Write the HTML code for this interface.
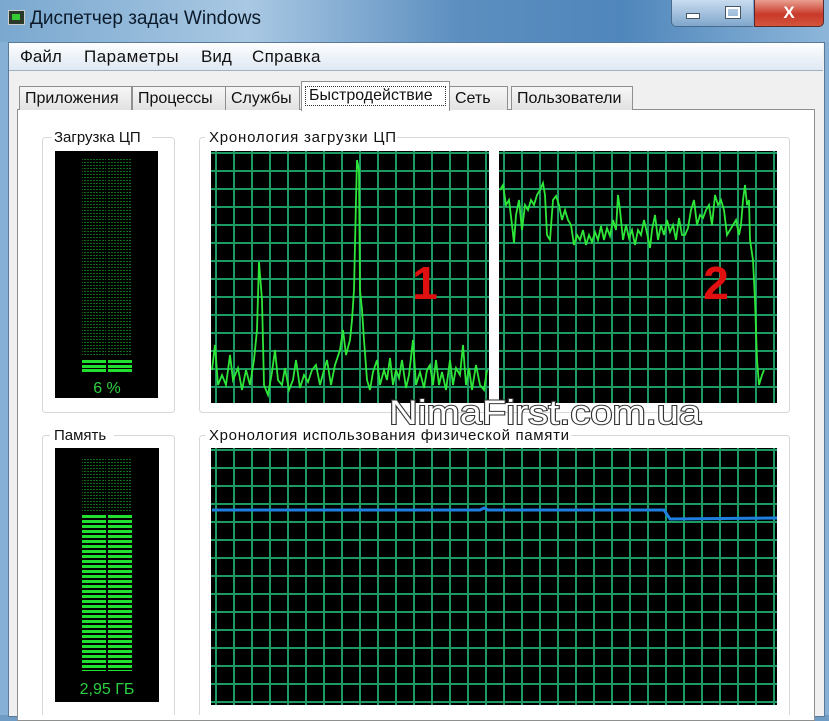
<!DOCTYPE html>
<html><head><meta charset="utf-8"><style>
body{margin:0;width:829px;height:715px;overflow:hidden;font-family:"Liberation Sans","DejaVu Sans",sans-serif;background:#6f9cc4;position:relative}
.abs{position:absolute}
.t{font-size:16px;color:#111;white-space:nowrap}
.grid{position:absolute;background-color:#000;background-image:linear-gradient(90deg,#1d9a62 0,#1d9a62 2px,transparent 2px),linear-gradient(#1d9a62 0,#1d9a62 2px,transparent 2px);background-size:18px 18px}
.tab{position:absolute;top:86px;height:23px;padding:0 5px;line-height:23px;background:linear-gradient(#f6f6f6,#e2e2e2);border:1px solid #8e8f8f;border-bottom:none;font-size:16px;color:#111;white-space:nowrap;transform-origin:left;}
</style></head><body>
<div class="abs" style="left:0;top:0;width:829px;height:42px;background:linear-gradient(90deg,#7aa8cf 0%,#a9c8e3 30%,#5d8fc0 55%,#4f86bb 75%,#8db6da 100%)"></div>
<div class="abs" style="left:0;top:42px;width:829px;height:673px;background:#86b0d6"></div>
<div class="abs" style="left:8px;top:10px;width:15px;height:13px;background:#2a3a2a;border:1px solid #ccc"><div style="margin:3px;width:8px;height:6px;background:#3c3"></div></div>
<div class="abs t" style="left:30px;top:8px;font-size:19px;color:#0b1a2a">Диспетчер задач Windows</div>
<div class="abs" style="left:671px;top:0;width:41px;height:26px;background:linear-gradient(#c9dcef,#7fa6cc);border:1px solid #4a6a8a;border-top:none;border-radius:0 0 0 5px"><div style="margin:13px auto 0;width:12px;height:4px;background:#fff;border:1px solid #456"></div></div>
<div class="abs" style="left:713px;top:0;width:40px;height:26px;background:linear-gradient(#c9dcef,#7fa6cc);border-bottom:1px solid #4a6a8a"><div style="margin:7px auto 0;width:10px;height:7px;border:2px solid #fff;outline:1px solid #456"></div></div>
<div class="abs" style="left:754px;top:0;width:68px;height:26px;background:linear-gradient(#e9a090,#c8392a 55%,#d2553c);border:1px solid #5a2a2a;border-top:none;border-radius:0 0 5px 0;color:#fff;font-weight:bold;font-size:17px;text-align:center;line-height:26px">X</div>
<div class="abs" style="left:8px;top:42px;width:815px;height:673px;background:#f0f0f0;border:1px solid #5a7a9a"></div>
<div class="abs" style="left:9px;top:43px;width:814px;height:27px;background:linear-gradient(#fdfeff,#dfe8f3);border-bottom:1px solid #a0b0c0"></div>
<div class="abs t" style="left:20px;top:47px;font-size:17px">Файл</div>
<div class="abs t" style="left:84px;top:47px;font-size:17px;letter-spacing:0.5px">Параметры</div>
<div class="abs t" style="left:201px;top:47px;font-size:17px">Вид</div>
<div class="abs t" style="left:252px;top:47px;font-size:17px;letter-spacing:0.3px">Справка</div>
<div class="abs" style="left:17px;top:109px;width:796px;height:610px;background:#fff;border:1px solid #8e8f8f"></div>
<div class="tab" style="left:19px;width:101px">Приложения</div>
<div class="tab" style="left:132px;width:84px">Процессы</div>
<div class="tab" style="left:225px;width:63px">Службы</div>
<div class="tab" style="left:449px;width:47px">Сеть</div>
<div class="tab" style="left:511px;width:110px">Пользователи</div>
<div class="abs t" style="left:301px;top:81px;height:29px;width:147px;background:#fff;border:1px solid #8e8f8f;border-bottom:none"><div style="margin:4px 3px;border:1px dotted #333;padding:0 3px;line-height:18px;font-size:16px">Быстродействие</div></div>

<div class="grid" style="left:211px;top:151px;width:278px;height:252px;background-position:4px 1px"></div>
<div class="grid" style="left:499px;top:151px;width:278px;height:252px;background-position:4px 1px"></div>
<div class="grid" style="left:211px;top:448px;width:566px;height:257px;background-position:4px 1px"></div>

<svg class="abs" style="left:0;top:0" width="829" height="715">
<defs>
<pattern id="d" width="3" height="3" patternUnits="userSpaceOnUse"><rect width="2" height="1" fill="#0d6a1a"/></pattern>
<pattern id="b" width="4" height="5" patternUnits="userSpaceOnUse" y="515"><rect width="4" height="3" fill="#22e030"/></pattern>
</defs>
<g fill="none" stroke="#d8d8d8">
<rect x="42.5" y="137.5" width="132" height="275" rx="3"/>
<rect x="199.5" y="137.5" width="590" height="275" rx="3"/>
<rect x="42.5" y="435.5" width="132" height="285" rx="3"/>
<rect x="199.5" y="435.5" width="590" height="285" rx="3"/>
</g>
<rect x="52" y="128" width="100" height="18" fill="#fff"/>
<rect x="205" y="128" width="192" height="18" fill="#fff"/>
<rect x="50" y="426" width="64" height="18" fill="#fff"/>
<rect x="205" y="426" width="366" height="18" fill="#fff"/>
<text x="54" y="142" font-size="15" fill="#111">Загрузка ЦП</text>
<text x="209" y="142" font-size="15" fill="#111" textLength="187">Хронология загрузки ЦП</text>
<text x="54" y="440" font-size="15" fill="#111">Память</text>
<text x="209" y="440" font-size="15" fill="#111" textLength="360">Хронология использования физической памяти</text>
<rect x="55" y="151" width="103" height="247" fill="#000"/>
<rect x="82" y="158" width="24" height="198" fill="url(#d)"/>
<rect x="108" y="158" width="24" height="198" fill="url(#d)"/>
<rect x="82" y="360" width="24" height="3" fill="#22e030"/><rect x="108" y="360" width="24" height="3" fill="#22e030"/>
<rect x="82" y="365" width="24" height="3" fill="#22e030"/><rect x="108" y="365" width="24" height="3" fill="#22e030"/>
<rect x="82" y="369" width="24" height="3" fill="#22e030"/><rect x="108" y="369" width="24" height="3" fill="#22e030"/>
<text x="107" y="393" font-size="16" fill="#2bd040" text-anchor="middle">6 %</text>
<rect x="55" y="448" width="104" height="254" fill="#000"/>
<rect x="82" y="457" width="24" height="56" fill="url(#d)"/>
<rect x="108" y="457" width="24" height="56" fill="url(#d)"/>
<rect x="82" y="515" width="24" height="156" fill="url(#b)"/>
<rect x="108" y="515" width="24" height="156" fill="url(#b)"/>
<text x="107" y="694" font-size="16" fill="#2bd040" text-anchor="middle">2,95 ГБ</text>
<polyline fill="none" stroke="#2ee63a" stroke-width="1.8" points="212,370 215,345 218,385 222,375 226,385 230,355 233,380 238,368 242,390 246,370 250,385 254,360 257,330 259,262 262,300 264,385 268,395 272,372 275,350 278,380 282,385 285,368 289,390 293,380 296,360 300,388 304,375 308,382 312,370 316,365 320,385 324,370 327,360 331,385 335,365 340,350 343,330 346,355 350,340 352,320 354,290 356,200 357,160 359,170 360,290 362,310 364,340 367,380 370,390 373,372 377,360 380,385 384,370 387,380 390,358 393,385 396,370 399,378 402,360 406,388 409,375 413,340 416,385 420,372 424,388 427,370 430,365 433,385 436,360 439,385 442,372 446,390 450,360 453,385 456,368 460,375 463,345 466,385 469,368 472,390 476,365 480,385 484,390 487,370"/>
<polyline fill="none" stroke="#2ee63a" stroke-width="1.8" points="500,190 503,185 506,205 509,200 512,225 514,243 516,215 519,200 522,230 525,205 528,210 531,200 534,205 537,195 540,190 543,183 545,195 547,235 550,240 553,200 556,196 559,205 562,220 565,210 568,220 571,225 574,245 577,235 580,240 583,230 586,245 589,235 592,242 595,232 598,240 601,226 604,240 607,228 610,236 613,220 616,230 618,195 620,210 623,240 626,225 629,238 632,230 635,245 638,230 641,235 644,220 647,233 650,248 652,230 655,215 658,240 661,225 664,235 667,220 670,232 673,225 676,240 679,218 682,235 685,235 688,228 691,210 694,200 697,225 700,215 703,218 706,210 709,205 712,225 715,195 718,205 721,200 724,210 727,235 730,230 733,225 736,220 739,235 741,225 743,200 745,185 747,205 749,200 750,240 753,260 755,300 757,360 759,385 762,375 764,370"/>
<polyline fill="none" stroke="#1e7fe0" stroke-width="3" points="212,510 480,510 484,508 488,510 664,510 670,519 777,518"/>
<text x="425" y="299" font-size="46" font-weight="bold" fill="#e01010" text-anchor="middle">1</text>
<text x="716" y="299" font-size="46" font-weight="bold" fill="#e01010" text-anchor="middle">2</text>
<text x="545" y="424" font-size="34" fill="#fff" stroke="#333" stroke-width="2" paint-order="stroke" text-anchor="middle" textLength="312" lengthAdjust="spacingAndGlyphs">NimaFirst.com.ua</text>
</svg>
</body></html>
